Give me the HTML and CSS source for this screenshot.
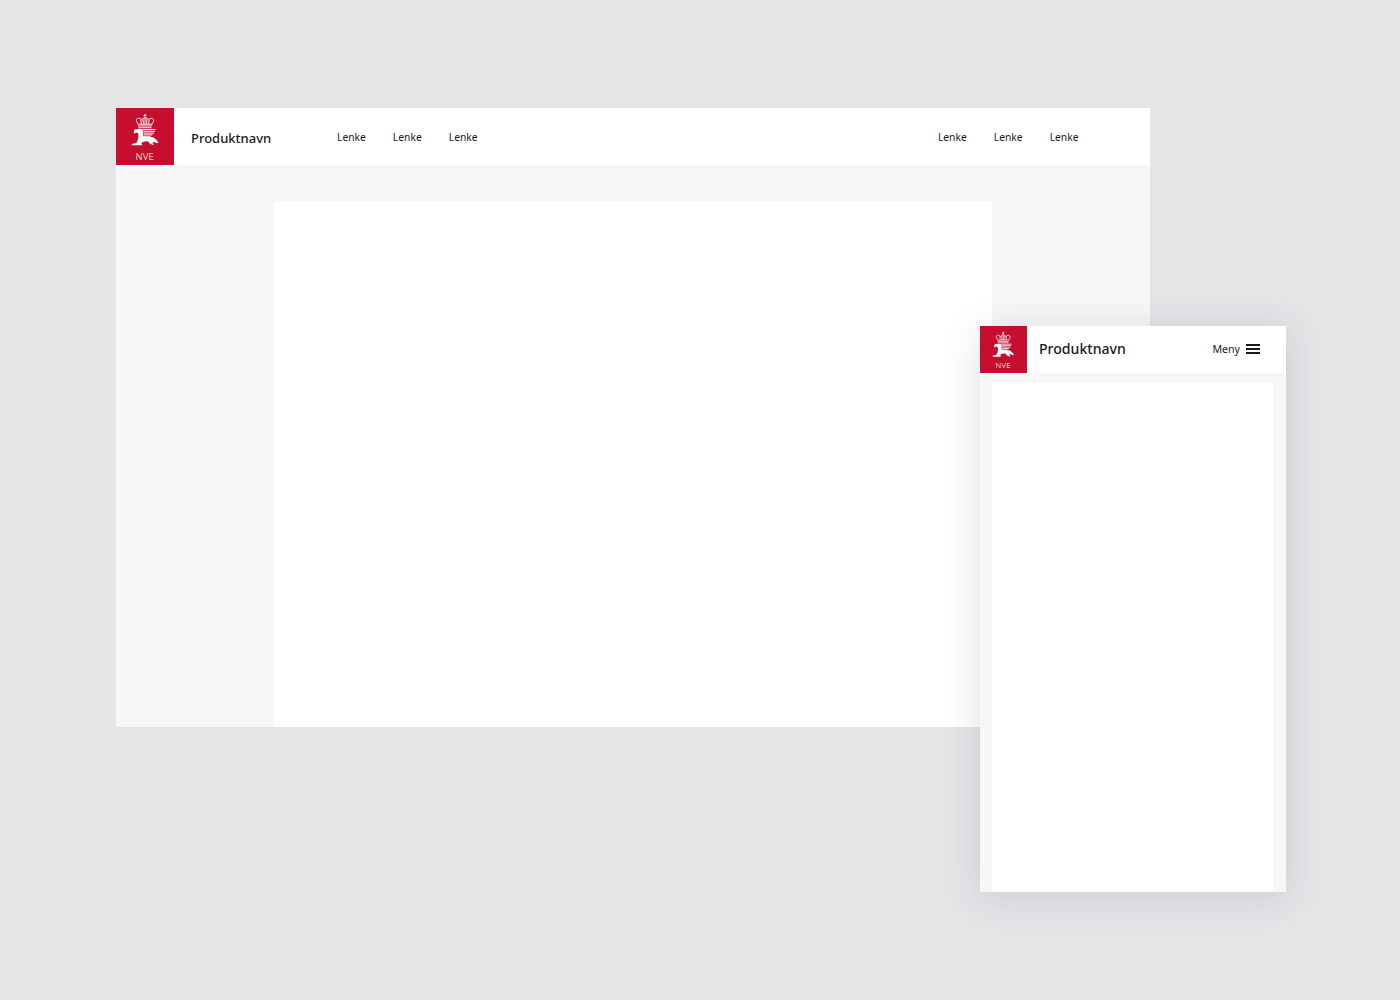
FILE: index.html
```html
<!DOCTYPE html>
<html lang="en">
<head>
  <meta charset="UTF-8">
  <title>Produktnavn</title>
  <link rel="stylesheet" href="styles.css">
</head>
<body>
  <svg class="defs" width="0" height="0">
    <symbol id="nve-mark" viewBox="0 0 28 34">
      <!-- crown -->
      <g fill="none" stroke="#fff" stroke-width="0.9">
        <path d="M14 1v3.500M12.600 2.300h2.800"/>
        <path d="M7.200 11C4 7.500 5.500 5 8 5.300c1.500.2 2.600 1 3 2M20.800 11c3.200-3.500 1.700-6-.8-5.700-1.500.2-2.600 1-3 2M11 6.200c1.500-2 4.500-2 6 0"/>
        <path d="M9.800 6.500l.5 4.500M12 5.500l.3 5.500M14 5v6M16 5.500l-.3 5.500M18.200 6.500l-.5 4.500"/>
        <path d="M6.600 11.300h14.800M7 13h14M7.500 14.700h13"/>
      </g>
      <!-- horse -->
      <path fill="#fff" d="M2.600 19.500 3.600 16.400 9 15.800c2.200.2 3.400 1.300 3.200 3l-.3 2.400c-.1 1.500.6 2.400 2 2.700l6 .2c2.400.1 4 1 4.800 2.500l1.300.6 1.500 3-2.900-.5-1.300-.8-2.200.8 1.800 1.700-.9.700-4.100-2.100-.3-1.500-2.500-.3-3.200.7-1.800 1.300 1.300 1.400-.5.700H1.400L.4 31l5-1 1.300-2.700.8-3.600-.3-3.500-1.400-.7-2.800.9z"/>
      <path fill="none" stroke="#fff" stroke-width="1" d="M11.500 16.500h13M12.500 18.300h11.500M12.500 20.100h10.500M12.500 21.900h9M13 23.700h6.500"/>
    </symbol>
  </svg>

  <div class="stage">
    <section class="window desktop">
      <header class="bar">
        <div class="logo">
          <svg class="mark"><use href="#nve-mark"/></svg>
          <span class="logo-text">NVE</span>
        </div>
        <span class="product">Produktnavn</span>
        <nav class="links">
          <a>Lenke</a>
          <a>Lenke</a>
          <a>Lenke</a>
        </nav>
        <nav class="links links-right">
          <a>Lenke</a>
          <a>Lenke</a>
          <a>Lenke</a>
        </nav>
      </header>
      <div class="content"></div>
    </section>

    <section class="window mobile">
      <header class="bar">
        <div class="logo">
          <svg class="mark"><use href="#nve-mark"/></svg>
          <span class="logo-text">NVE</span>
        </div>
        <span class="product">Produktnavn</span>
        <button class="menu" type="button">
          Meny
          <span class="burger"></span>
        </button>
      </header>
      <div class="content"></div>
    </section>
  </div>
</body>
</html>
```

FILE: styles.css
```css
html, body { margin: 0; height: 100%; }
body { background: #e3e5e7; font-family: "Noto Sans", "Open Sans", sans-serif; color: #1a1a1a; overflow: hidden; }
.defs { position: absolute; }
.stage { position: relative; width: 1400px; height: 1000px; }

.window { position: absolute; display: flex; flex-direction: column; background: #f7f7f7; }
.desktop { left: 116px; top: 108px; width: 1034px; height: 619.4px; }
.mobile { left: 979.7px; top: 326px; width: 306px; height: 566px; box-shadow: 0 4px 36px rgba(40, 45, 50, 0.14); }

.bar { display: flex; align-items: center; background: #fff; flex-shrink: 0; }
.logo { display: flex; flex-direction: column; align-items: center; box-sizing: border-box; background: #c60f2f; color: #fff; flex-shrink: 0; }
.mark { display: block; }
.logo-text { display: block; letter-spacing: 0.3px; line-height: 1; font-weight: 300; }
.product { font-weight: 500; color: #1a1a1a; }
.content { background: #fff; flex: 1; }

.desktop .bar { height: 57px; }
.desktop .logo { width: 57.6px; height: 57px; padding-top: 5px; }
.desktop .mark { width: 28px; height: 34px; }
.desktop .logo-text { font-size: 9.6px; margin-top: 5px; }
.desktop .product { font-size: 13px; margin-top: 2px; margin-left: 17.4px; width: 146px; }
.desktop .content { margin: 36px 158px 0; }

.links { display: flex; gap: 27px; font-size: 10.3px; margin-top: 1px; }
.links-right { margin-left: auto; margin-right: 71.5px; }

.mobile .bar { height: 47px; }
.mobile .logo { width: 47px; height: 47px; padding-top: 5px; }
.mobile .mark { width: 22.4px; height: 27.2px; }
.mobile .logo-text { font-size: 7.8px; margin-top: 3.5px; }
.mobile .product { font-size: 14.1px; margin-top: -3px; margin-left: 12.3px; }
.mobile .content { margin: 10px 12.5px 0; }

.menu { display: flex; align-items: center; gap: 6px; margin-left: auto; margin-top: -2px; margin-right: 25.7px; padding: 0; border: none; background: none; color: #1a1a1a; font: inherit; font-size: 10.6px; }
.burger { display: block; width: 14px; height: 2px; background: #1a1a1a; box-shadow: 0 -4px 0 #1a1a1a, 0 4px 0 #1a1a1a; }
```
